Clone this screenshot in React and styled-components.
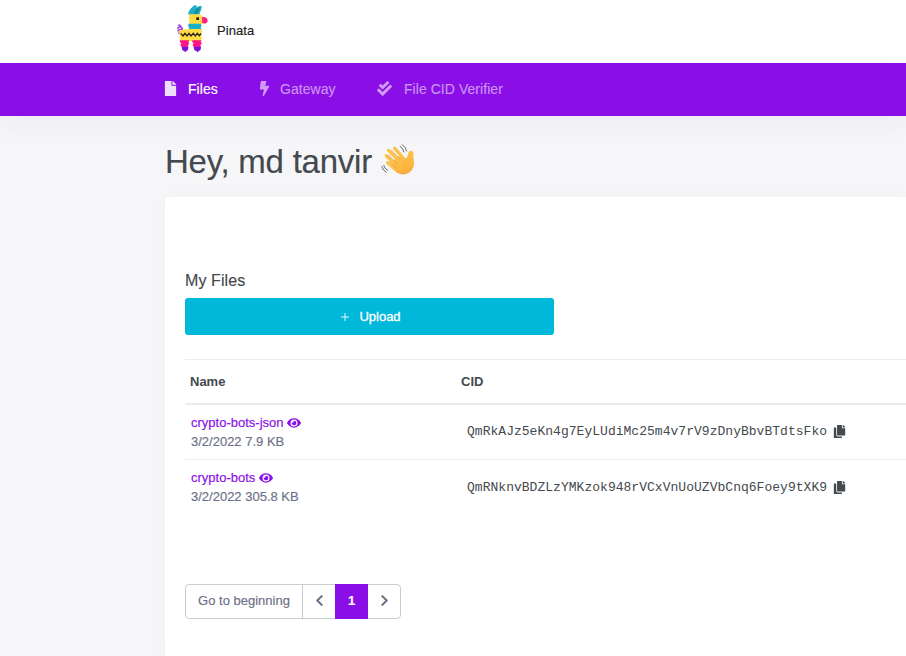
import React from 'react';
import styled, { createGlobalStyle } from 'styled-components';
import {
  FaFile, FaBolt, FaCheckDouble, FaEye, FaCopy, FaChevronLeft, FaChevronRight,
} from 'react-icons/fa';

const purple = '#8a0ee6';
const ink = '#43494e';
const muted = '#6b6f87';

const GlobalStyle = createGlobalStyle`
  * { box-sizing: border-box; }
  html, body { margin: 0; height: 100%; overflow: hidden; }
  body {
    background: #f6f6f9;
    color: ${ink};
    font-family: "Liberation Sans", Arial, sans-serif;
    font-size: 13px;
    -webkit-text-stroke: 0.15px currentColor;
  }
`;

const Page = styled.div`
  height: 656px;
  overflow: hidden;
  display: flex;
  flex-direction: column;
`;

const Header = styled.header`
  height: 63px;
  flex: none;
  background: #fff;
  padding: 2px 0 0 172px;
  display: flex;
  gap: 5px;
`;

const BrandName = styled.span`
  color: #212121;
  line-height: 15px;
  padding-top: 21px;
  letter-spacing: 0.08px;
`;

const Nav = styled.nav`
  height: 53px;
  flex: none;
  background: ${purple};
  padding: 0 0 2px 163px;
  display: flex;
  align-items: center;
  box-shadow: 0 8px 24px rgba(60, 40, 110, 0.05);
`;

const NavItem = styled.a`
  display: flex;
  align-items: center;
  width: ${(p) => p.$width}px;
  font-size: 14px;
  line-height: 20px;
  letter-spacing: 0.05px;
  color: ${(p) => (p.$active ? '#fff' : '#ca94f3')};
`;

const NavIcon = styled.span`
  display: flex;
  width: ${(p) => p.$slot}px;
  color: ${(p) => (p.$active ? '#f0defc' : '#d09af5')};
`;

const Greeting = styled.h1`
  margin: 0;
  height: 81px;
  flex: none;
  padding: 22px 0 0 165px;
  display: flex;
  font-size: 33px;
  line-height: 48px;
  font-weight: 400;
  letter-spacing: -0.24px;
`;

const WaveIcon = styled.svg`
  width: 45px;
  height: 45px;
  margin-left: 3px;
`;

const Card = styled.main`
  flex: 1;
  margin-left: 165px;
  padding: 72px 0 0 20px;
  background: #fff;
  border-top-left-radius: 3px;
  box-shadow: 0 0 20px rgba(60, 60, 90, 0.025);
`;

const SectionTitle = styled.h2`
  margin: 0;
  height: 29px;
  font-size: 16px;
  line-height: 24px;
  font-weight: 400;
  letter-spacing: 0.1px;
`;

const UploadButton = styled.button`
  display: flex;
  align-items: center;
  justify-content: center;
  gap: 10px;
  width: 369px;
  height: 37px;
  border: 0;
  border-radius: 3px;
  background: #00b8d9;
  color: #fff;
  font: 13px "Liberation Sans", Arial, sans-serif;
  padding: 0 0 0 3px;
  -webkit-text-stroke: 0.3px #fff;
`;

const Table = styled.section`
  margin-top: 24px;
  border-top: 1px solid #ecedef;
`;

const Columns = styled.div`
  display: grid;
  grid-template-columns: 276px 1fr;
  align-items: center;
`;

const TableHead = styled(Columns)`
  height: 45px;
  padding-left: 5px;
  border-bottom: 2px solid #e9edf1;
  font-weight: 700;
  grid-template-columns: 271px 1fr;
  -webkit-text-stroke: 0;
`;

const Row = styled(Columns)`
  height: 55px;
  padding-left: 6px;
  border-bottom: 1px solid ${(p) => (p.$last ? 'transparent' : '#ecedef')};
`;

const FileInfo = styled.div`
  line-height: 19px;
  color: ${muted};
`;

const FileLink = styled.a`
  display: flex;
  align-items: center;
  gap: 4px;
  color: ${purple};
`;

const Cid = styled.div`
  display: flex;
  align-items: center;
  gap: 6px;
  padding-bottom: ${(p) => (p.$last ? 0 : 2)}px;
  font-family: "Liberation Mono", monospace;
  letter-spacing: 0.026px;
  -webkit-text-stroke: 0;
`;

const Pager = styled.div`
  display: inline-flex;
  height: 35px;
  margin-top: 69px;
  border: 1px solid #c6cdd3;
  border-radius: 4px;
`;

const PageCell = styled.button`
  display: flex;
  align-items: center;
  justify-content: center;
  width: ${(p) => p.$width}px;
  margin: ${(p) => (p.$active ? '-1px 0' : '0')};
  padding: 0 0 2px;
  border: 0;
  border-right: ${(p) => (p.$divider ? '1px solid #c6cdd3' : '0')};
  background: ${(p) => (p.$active ? purple : 'transparent')};
  color: ${(p) => (p.$active ? '#fff' : muted)};
  font: ${(p) => (p.$active ? 700 : 400)} 13px "Liberation Sans", Arial, sans-serif;
`;

function PinataLogo() {
  return (
    <svg width="40" height="52" viewBox="0 0 120 156" aria-hidden="true">
      <path d="M32 95 C29 83 34 78 27 75 C21 73 17 77 18 81 M31 88 C27 79 20 82 17 88 M28 91 C23 89 20 92 22 95 M27 75 C25 68 20 69 19 71" fill="none" stroke="#9a45e6" strokeWidth="5" />
      <path d="M49 38 C49 23 59 18 68 9 L75 12 L72 19 C77 13 81 11 89 12 C90 22 84 28 82 38 Z" fill="#20adc4" />
      <path d="M67 36 C67 26 75 19 83 15 C83 25 77 29 76 37 Z" fill="#118ca4" />
      <path d="M51 37 H84 L93 45 V64 L87 67 H50 L53 61 L49 57 L53 52 L49 47 L53 43 Z" fill="#ffda42" />
      <path d="M90 46 C98 43 107 48 107 56 C107 63 98 67 91 63 Z" fill="#ff1e7d" />
      <rect x="73" y="46" width="8" height="8" fill="#171820" />
      <path d="M50 65 H86 L89 70 L86 75 L89 83 H48 L52 77 L48 72 Z" fill="#18afc7" />
      <path d="M23 84 L48 81 H88 L90 90 L87 94 L91 99 L87 104 L90 109 L87 118 H25 L22 112 L25 107 L21 101 L25 96 L21 91 Z" fill="#ffdb45" />
      <path d="M26 94 L33 102 L39 94 L45 102 L51 94 L57 102 L64 94 L70 102 L76 94 L82 101 L87 94" fill="none" stroke="#28251a" strokeWidth="4" />
      <path d="M24 115 H52 L49 120 L52 124 L48 130 L49 135 H29 L25 129 L28 124 L23 120 Z M62 115 H89 L86 119 L90 124 L85 129 L87 135 H65 L62 128 L65 124 L60 119 Z" fill="#ff1684" />
      <path d="M29 134 H49 L48 143 L40 150 L31 144 Z M65 134 H87 L86 143 L77 150 L67 144 Z" fill="#7913db" />
    </svg>
  );
}

function WavingHand() {
  return (
    <WaveIcon viewBox="0 0 135 135" aria-label="waving hand">
      <defs>
        <linearGradient id="skin" x1="0" y1="0" x2="0.5" y2="1">
          <stop offset="0" stopColor="#ffcb55" />
          <stop offset="1" stopColor="#fbb03a" />
        </linearGradient>
      </defs>
      <g fill="none" stroke="#fdc04a" strokeLinecap="round" strokeWidth="10">
        <path d="M41 37 L80 76" />
        <path d="M59 31 L90 66" />
        <path d="M34 53 L73 90" />
        <path d="M38 74 L66 98" />
      </g>
      <path d="M83 57 C92 64 97 61 98 54 C98 43 104 37 111 39 C118 42 115 49 115 59 C117 69 120 82 111 94 C100 109 80 113 66 101 L52 84 L62 54 Z" fill="url(#skin)" />
      <g fill="none" stroke="#df8b29" strokeWidth="1.7" strokeLinecap="round">
        <path d="M49 37 L75 62 M41 52 L68 78 M43 71 L62 87" />
        <path d="M65 101 C80 114 99 109 111 95" />
        <path d="M86 78 C88 66 98 68 99 54" opacity=".5" />
      </g>
      <g fill="none" stroke="#64686b" strokeWidth="3" strokeLinecap="round">
        <path d="M76 25 Q84 31 87 42 M82 20 Q92 27 95 39" />
        <path d="M26 82 Q28 92 38 97 M20 86 Q24 98 34 103" />
      </g>
    </WaveIcon>
  );
}

const files = [
  { name: 'crypto-bots-json', meta: '3/2/2022 7.9 KB', cid: 'QmRkAJz5eKn4g7EyLUdiMc25m4v7rV9zDnyBbvBTdtsFko' },
  { name: 'crypto-bots', meta: '3/2/2022 305.8 KB', cid: 'QmRNknvBDZLzYMKzok948rVCxVnUoUZVbCnq6Foey9tXK9' },
];

export default function App() {
  return (
    <Page>
      <GlobalStyle />
      <Header>
        <PinataLogo />
        <BrandName>Pinata</BrandName>
      </Header>
      <Nav>
        <NavItem $active $width={94}>
          <NavIcon $active $slot={25}><FaFile size={15} /></NavIcon>
          Files
        </NavItem>
        <NavItem $width={120}>
          <NavIcon $slot={23}><FaBolt size={15} /></NavIcon>
          Gateway
        </NavItem>
        <NavItem $width={160}>
          <NavIcon $slot={27}><FaCheckDouble size={15} /></NavIcon>
          File CID Verifier
        </NavItem>
      </Nav>
      <Greeting>
        <span>Hey, md tanvir</span>
        <WavingHand />
      </Greeting>
      <Card>
        <SectionTitle>My Files</SectionTitle>
        <UploadButton>
          <svg width="8" height="8" viewBox="0 0 8 8" aria-hidden="true">
            <path d="M4 0V8M0 4H8" stroke="#fff" strokeWidth="0.9" />
          </svg>
          Upload
        </UploadButton>
        <Table>
          <TableHead>
            <span>Name</span>
            <span>CID</span>
          </TableHead>
          {files.map((file, i) => {
            const last = i === files.length - 1;
            return (
              <Row key={file.name} $last={last}>
                <FileInfo>
                  <FileLink>{file.name}<FaEye size={14} /></FileLink>
                  {file.meta}
                </FileInfo>
                <Cid $last={last}>{file.cid}<FaCopy size={13} /></Cid>
              </Row>
            );
          })}
        </Table>
        <Pager>
          <PageCell $width={117} $divider>Go to beginning</PageCell>
          <PageCell $width={32}><FaChevronLeft size={13} /></PageCell>
          <PageCell $width={33} $active>1</PageCell>
          <PageCell $width={32}><FaChevronRight size={13} /></PageCell>
        </Pager>
      </Card>
    </Page>
  );
}
